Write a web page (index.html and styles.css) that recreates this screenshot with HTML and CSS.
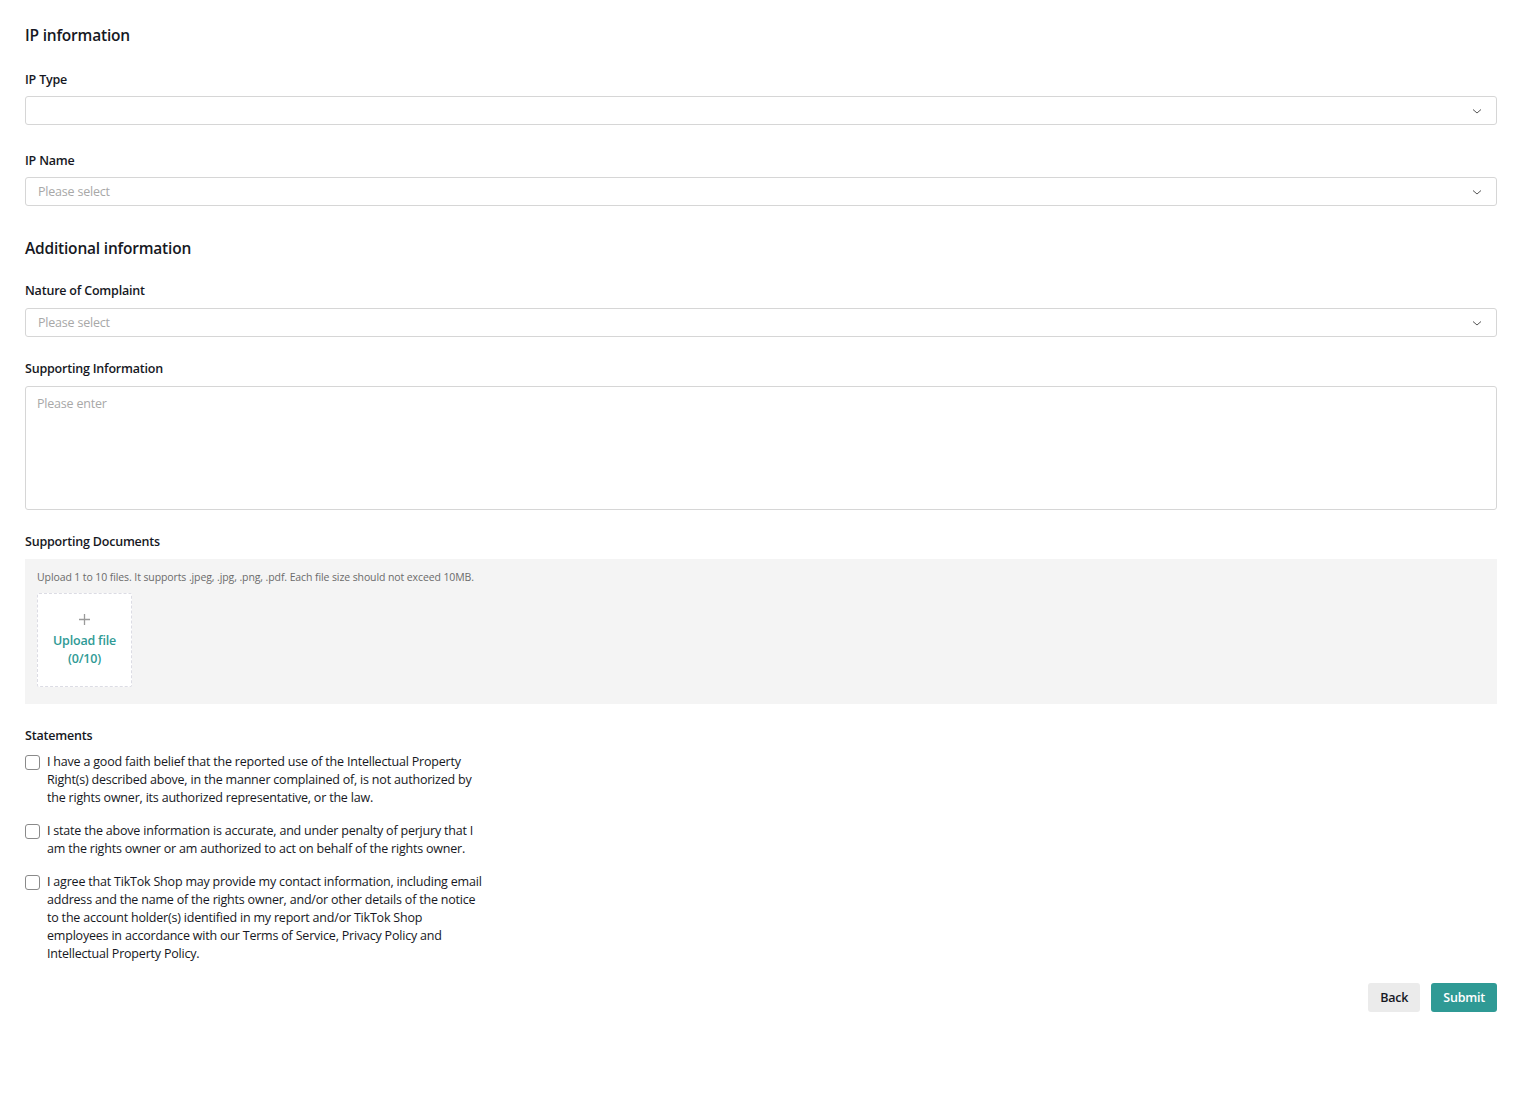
FILE: index.html
```html
<!DOCTYPE html>
<html lang="en">
<head>
    <meta charset="UTF-8">
    <meta name="viewport" content="width=device-width,initial-scale=1">
    <title>IP complaint</title>
    <link rel="stylesheet" href="styles.css">
</head>
<body>
<main class="page">
    <section class="block">
        <h2 class="block-title">IP information</h2>
        <div class="field">
            <label class="field-label">IP Type</label>
            <div class="select">
                <span class="select-value"></span>
                <svg class="chevron" width="12" height="12" viewBox="0 0 12 12"><path d="M2 4.5l4 3.5 4-3.5" fill="none" stroke="#555" stroke-width="1"/></svg>
            </div>
        </div>
        <div class="field">
            <label class="field-label">IP Name</label>
            <div class="select">
                <span class="select-value placeholder">Please select</span>
                <svg class="chevron" width="12" height="12" viewBox="0 0 12 12"><path d="M2 4.5l4 3.5 4-3.5" fill="none" stroke="#555" stroke-width="1"/></svg>
            </div>
        </div>
    </section>

    <section class="block">
        <h2 class="block-title">Additional information</h2>
        <div class="field">
            <label class="field-label">Nature of Complaint</label>
            <div class="select">
                <span class="select-value placeholder">Please select</span>
                <svg class="chevron" width="12" height="12" viewBox="0 0 12 12"><path d="M2 4.5l4 3.5 4-3.5" fill="none" stroke="#555" stroke-width="1"/></svg>
            </div>
        </div>
        <div class="field">
            <label class="field-label" for="info">Supporting Information</label>
            <textarea id="info" class="textarea" placeholder="Please enter"></textarea>
        </div>
        <div class="field">
            <label class="field-label">Supporting Documents</label>
            <div class="upload-area">
                <p class="upload-hint">Upload 1 to 10 files. It supports .jpeg, .jpg, .png, .pdf. Each file size should not exceed 10MB.</p>
                <div class="upload-card">
                    <svg class="upload-plus" width="11" height="11" viewBox="0 0 11 11"><path d="M5.5 0v11M0 5.5h11" stroke="#9a9a9a" stroke-width="1.3"/></svg>
                    <span class="upload-text">Upload file</span>
                    <span class="upload-text">(0/10)</span>
                </div>
            </div>
        </div>
        <div class="field">
            <label class="field-label">Statements</label>
            <div class="statements">
                <label class="statement"><input type="checkbox"><span>I have a good faith belief that the reported use of the Intellectual Property Right(s) described above, in the manner complained of, is not authorized by the rights owner, its authorized representative, or the law.</span></label>
                <label class="statement"><input type="checkbox"><span>I state the above information is accurate, and under penalty of perjury that I am the rights owner or am authorized to act on behalf of the rights owner.</span></label>
                <label class="statement"><input type="checkbox"><span>I agree that TikTok Shop may provide my contact information, including email address and the name of the rights owner, and/or other details of the notice to the account holder(s) identified in my report and/or TikTok Shop employees in accordance with our Terms of Service, Privacy Policy and Intellectual Property Policy.</span></label>
            </div>
        </div>
    </section>

    <div class="actions">
        <button class="btn btn-back">Back</button>
        <button class="btn btn-submit">Submit</button>
    </div>
</main>
</body>
</html>
```

FILE: styles.css
```css
* {
    margin: 0;
    padding: 0;
    box-sizing: border-box;
}

body {
    font-family: "Open Sans", "Noto Sans", sans-serif;
    font-size: 12.5px;
    letter-spacing: -0.2px;
    color: #161823;
    background: #fff;
}

.page {
    padding: 23px 22px 40px 25px;
}

.block-title {
    font-size: 15.5px;
    font-weight: 600;
    line-height: 24px;
    margin-bottom: 22px;
}

.block:first-child .block-title {
    margin-bottom: 24px;
}

.block + .block {
    margin-top: 30px;
}

.field {
    margin-bottom: 23px;
}

.block:first-child .field {
    margin-bottom: 27px;
}

.field-label {
    display: block;
    font-weight: 600;
    line-height: 18px;
    margin-bottom: 8px;
}

.block:first-child .field-label {
    margin-bottom: 7px;
}

.select {
    display: flex;
    align-items: center;
    justify-content: space-between;
    height: 29px;
    border: 1px solid #d6d6d6;
    border-radius: 3px;
    padding: 0 13px 0 12px;
}

.select-value {
    line-height: 18px;
}

.placeholder,
.textarea::placeholder {
    color: #a8a8a8;
}

.textarea {
    display: block;
    width: 100%;
    height: 124px;
    border: 1px solid #d6d6d6;
    border-radius: 3px;
    padding: 8px 11px;
    font: inherit;
    letter-spacing: inherit;
    line-height: 18px;
    resize: none;
}

.upload-area {
    background: #f4f4f4;
    padding: 10px 12px 17px;
}

.upload-hint {
    font-size: 10.5px;
    letter-spacing: -0.1px;
    color: #6b6b6b;
    line-height: 16px;
    margin-bottom: 8px;
}

.upload-card {
    width: 95px;
    height: 94px;
    background: #fff;
    border: 1px dashed #dcdce4;
    border-radius: 2px;
    display: flex;
    flex-direction: column;
    align-items: center;
    justify-content: center;
    padding-top: 2px;
}

.upload-plus {
    display: block;
    margin-bottom: 7px;
}

.upload-text {
    color: #2f9a95;
    font-weight: 600;
    line-height: 18px;
}

.statements {
    width: 460px;
}

.statement {
    display: flex;
    align-items: flex-start;
    line-height: 18px;
    margin-bottom: 15px;
}

.statement input {
    appearance: none;
    flex: none;
    width: 15px;
    height: 15px;
    border: 1px solid #8a8a8a;
    border-radius: 3px;
    margin: 2px 7px 0 0;
    background: #fff;
}

.actions {
    display: flex;
    justify-content: flex-end;
    gap: 11px;
    margin-top: -3px;
}

.btn {
    height: 29px;
    border: none;
    border-radius: 3px;
    font: inherit;
    letter-spacing: inherit;
    font-weight: 600;
    padding: 0 12px;
}

.btn-back {
    background: #ebebeb;
    color: #161823;
}

.btn-submit {
    background: #2f9a95;
    color: #fff;
}
```
